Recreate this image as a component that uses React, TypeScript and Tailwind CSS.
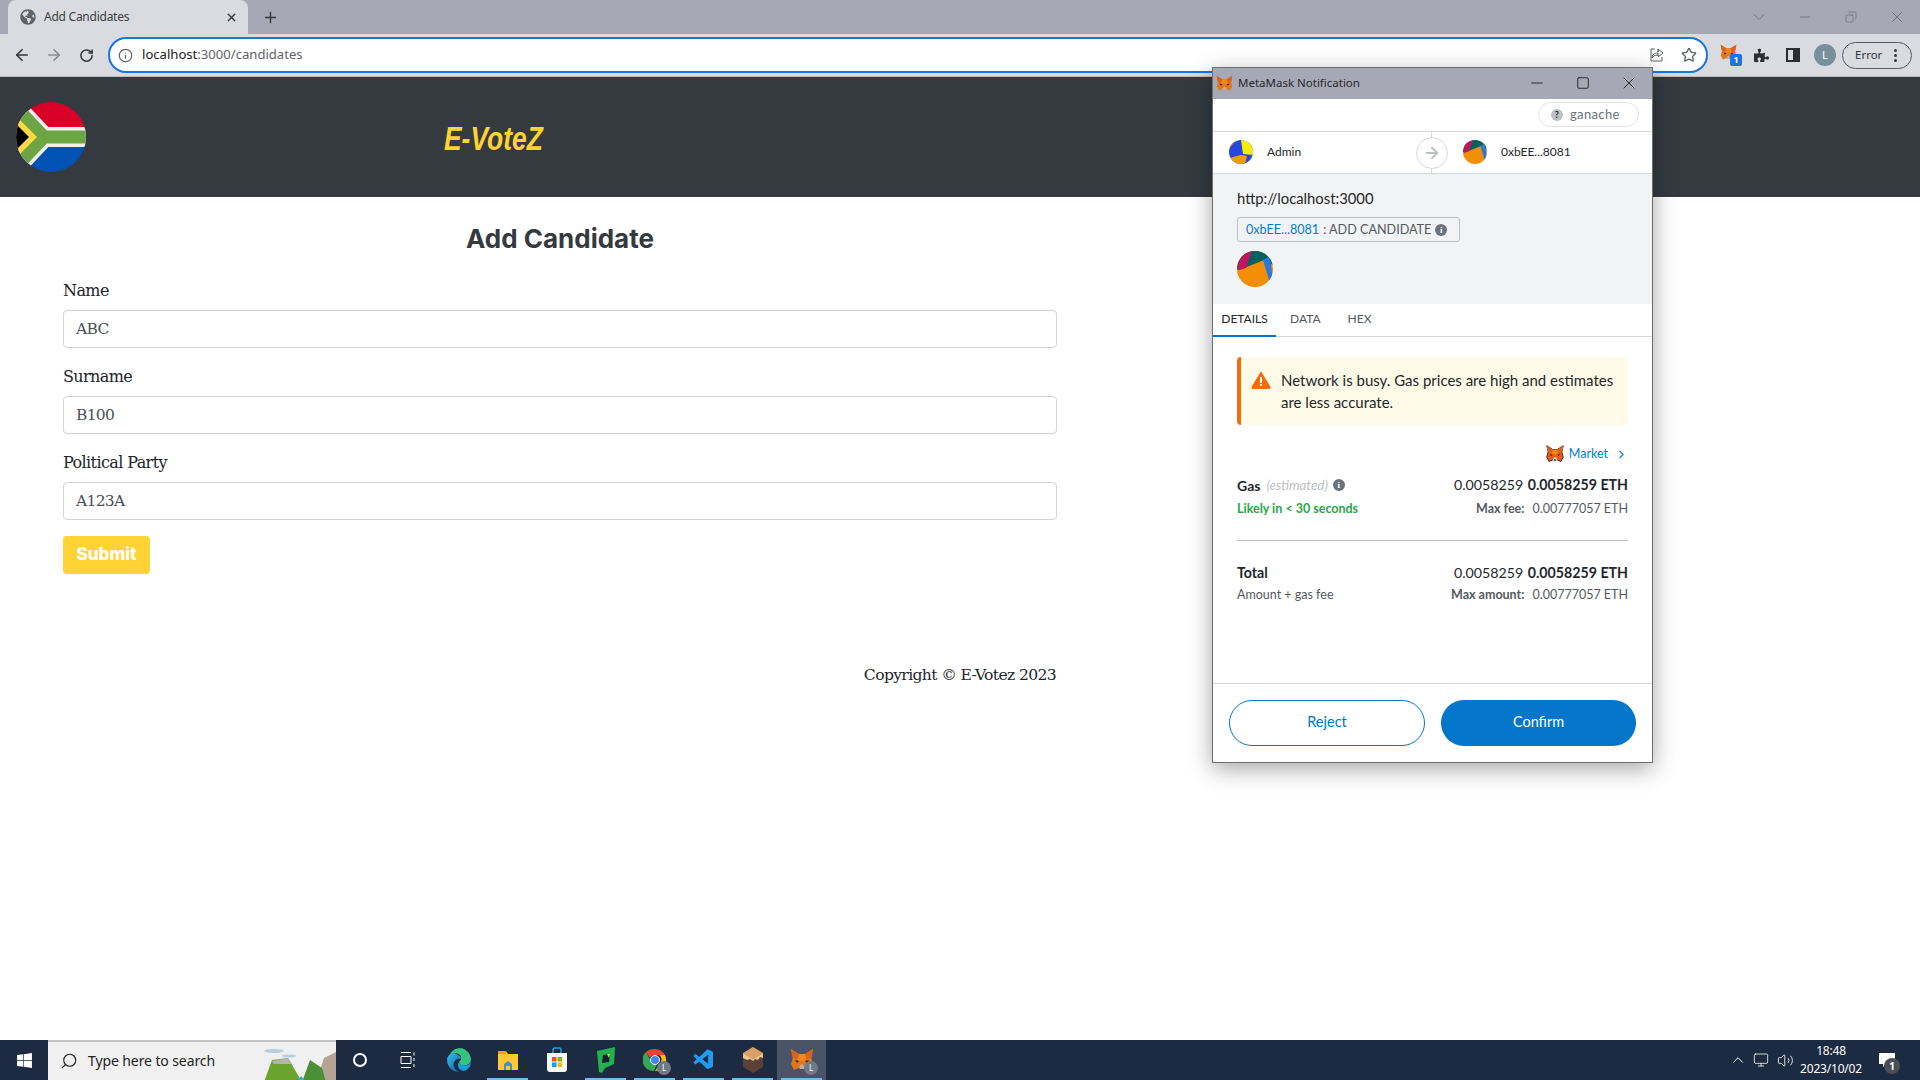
import { ArrowLeft, ArrowRight, RotateCw, Info, Star, Plus, X, Minus, Square, ChevronDown, ChevronRight, ChevronUp, Copy, Search, Volume2, Monitor } from "lucide-react";
import { FaPuzzlePiece, FaWindows, FaGlobeAmericas } from "react-icons/fa";
import { VscVscode } from "react-icons/vsc";

function Fox({ size = 18, face = false }: { size?: number; face?: boolean }) {
  return (
    <svg width={size} height={size} viewBox="0 0 24 24">
      <path d="M1 1l8 5h6l8-5-2 8 2 7-3 6-5-2h-6l-5 2-3-6 2-7z" fill={face ? "#ee5a13" : "#e2761b"} stroke={face ? "#222" : "none"} strokeWidth={face ? 1.2 : 0} />
      <path d="M9 6h6l1 6-4 1-4-1z" fill="#f6851b" />
      <path d="M5 12l4 1-2 2z M19 12l-4 1 2 2z" fill="#3a2a1a" />
      <path d="M9 19l3-3 3 3-1 2h-4z" fill={face ? "#fff" : "#c0ad9e"} />
      <path d="M1 1l8 5-2 5-5-2z M23 1l-8 5 2 5 5-2z" fill="#d5651a" />
      {face && <path d="M10 19l2 3 2-3z" fill="#222" />}
    </svg>
  );
}

function Jazz({ size, a }: { size: number; a?: boolean }) {
  return a ? (
    <svg width={size} height={size} viewBox="0 0 24 24">
      <clipPath id="ja"><circle cx="12" cy="12" r="12" /></clipPath>
      <g clipPath="url(#ja)">
        <rect width="24" height="24" fill="#2547dd" />
        <path d="M12 0h12v15l-10-1z" fill="#f8ee05" />
        <path d="M0 18l12-3 6 1-2 8H0z" fill="#f79a08" />
        <path d="M0 0h7L4 4 0 9z" fill="#f26b1d" />
      </g>
    </svg>
  ) : (
    <svg width={size} height={size} viewBox="0 0 36 36">
      <clipPath id={`jb${size}`}><circle cx="18" cy="18" r="18" /></clipPath>
      <g clipPath={`url(#jb${size})`}>
        <rect width="36" height="36" fill="#f38e05" />
        <path d="M0 0h36v14L27 9 2 19 0 18z" fill="#03625f" />
        <path d="M0 17L5 4l10-4 -6 17-7 2z" fill="#c4145f" />
        <path d="M26 9l7-4 3 26-3 1z" fill="#2479e2" />
        <path d="M33 28l-3 8h6z" fill="#2479e2" />
      </g>
    </svg>
  );
}

function Flag() {
  return (
    <svg width="70" height="70" viewBox="0 0 70 70" fill="none">
      <clipPath id="fl"><circle cx="35" cy="35" r="35" /></clipPath>
      <g clipPath="url(#fl)">
        <rect width="70" height="35" fill="#d80027" />
        <rect y="35" width="70" height="35" fill="#0052b4" />
        <path d="M-5 0L28 35-5 70M28 35H70" stroke="#f0f0f0" strokeWidth="20" />
        <path d="M-5 0L28 35-5 70M28 35H70" stroke="#6da544" strokeWidth="13" />
        <path d="M0 14L21 35 0 56z" fill="#ffda44" />
        <path d="M0 22L13 35 0 48z" fill="#000" />
      </g>
    </svg>
  );
}

function Field({ label, value }: { label: string; value: string }) {
  return (
    <div className="mb-[16px]">
      <div className="h-[24px] mb-[8px] pt-[1px] leading-[24px] text-[16px] text-[#212529] font-['DejaVu_Serif',serif] tracking-[-0.6px]">{label}</div>
      <div className="h-[38px] border border-[#ced4da] rounded-[4px] bg-white px-[12px] leading-[37px] text-[15.5px] text-[#495057] font-['DejaVu_Serif',serif] tracking-[-0.7px]">{value}</div>
    </div>
  );
}

function TaskIcon({ children, active, line }: { children: React.ReactNode; active?: boolean; line?: boolean }) {
  return (
    <div className={`relative w-[49px] h-[40px] flex items-center justify-center ${active ? "bg-[#4a5468]" : ""}`}>
      {children}
      {line && <div className="absolute bottom-0 left-[4px] right-[4px] h-[2px] bg-[#76b9ed]" />}
    </div>
  );
}

function Badge() {
  return <div className="absolute left-[27px] top-[21px] w-[14px] h-[14px] rounded-full bg-[#6c7a89] text-white text-[8px] leading-[14px] text-center font-['Noto_Sans',sans-serif]">L</div>;
}

function Popup() {
  return (
    <div className="absolute left-[1212px] top-[67px] w-[441px] h-[696px] border border-[#6e6e6e] bg-white flex flex-col shadow-[0_6px_22px_rgba(0,0,0,0.35)] font-['Lato',sans-serif] text-[#24272a]">
      <div className="h-[31px] bg-[#a6a9b5] flex items-center pl-[3px] shrink-0">
        <Fox size={17} />
        <span className="ml-[5px] mb-[2px] text-[11.5px] text-[#25282c] font-['Noto_Sans',sans-serif]">MetaMask Notification</span>
        <div className="ml-auto flex items-center -translate-y-[1px] text-[#1c1c1c]">
          <div className="w-[46px] flex justify-center"><Minus size={18} strokeWidth={1.2} /></div>
          <div className="w-[46px] flex justify-center"><Square size={14} strokeWidth={1.5} /></div>
          <div className="w-[46px] flex justify-center"><X size={20} strokeWidth={1.1} /></div>
        </div>
      </div>
      <div className="h-[33px] flex justify-end items-center pr-[13px] border-b border-[#d6d9dc] shrink-0">
        <div className="h-[25px] w-[101px] mb-[1px] rounded-full border border-[#e0e3e6] flex items-center pl-[12px] gap-[7px] text-[13px] text-[#6a737d] tracking-[0.35px]">
          <span className="w-[12px] h-[12px] rounded-full bg-[#bbc0c5] text-[9px] leading-[12px] text-center font-bold text-[#24272a]">?</span>
          ganache
        </div>
      </div>
      <div className="relative h-[42px] flex items-center border-b border-[#d6d9dc] shrink-0">
        <div className="w-[219px] flex items-center pl-[16px] gap-[14px] text-[12px] -translate-y-[1px]">
          <Jazz size={24} a />
          <span>Admin</span>
        </div>
        <div className="absolute left-[218px] top-0 bottom-0 w-px bg-[#d6d9dc]" />
        <div className="absolute left-[203px] top-[5px] w-[32px] h-[32px] rounded-full bg-white border border-[#d6d9dc] flex items-center justify-center">
          <ArrowRight size={18} strokeWidth={2.6} className="text-[#bbc0c5]" />
        </div>
        <div className="ml-[31px] flex items-center gap-[14px] text-[12px] -translate-y-[1px]">
          <Jazz size={24} />
          <span>0xbEE...8081</span>
        </div>
      </div>
      <div className="h-[130px] bg-[#f2f3f4] pl-[24px] pt-[14px] shrink-0">
        <div className="text-[14.8px] leading-[20px]">http://localhost:3000</div>
        <div className="mt-[9px] w-[223px] h-[25px] pt-[1px] rounded-[3px] border border-[#bbc0c5] flex items-center pl-[8px] text-[12.6px] text-[#535a61]">
          <span className="text-[#037dd6]">0xbEE...8081</span>
          <span className="ml-[4px]">: ADD CANDIDATE</span>
          <span className="ml-[4px] w-[12px] h-[12px] rounded-full bg-[#6a737d] text-white text-[9px] leading-[12px] text-center font-bold font-['Liberation_Serif',serif]">i</span>
        </div>
        <div className="mt-[9px]"><Jazz size={36} /></div>
      </div>
      <div className="h-[33px] flex border-b border-[#d6d9dc] text-[12px] text-[#535a61] shrink-0">
        <div className="relative w-[63px] pb-[2px] flex items-center justify-center text-[#24272a] -mb-px border-b-[2px] border-[#0376c9]">DETAILS</div>
        <div className="ml-[14px] pb-[2px] flex items-center">DATA</div>
        <div className="ml-[27px] pb-[2px] flex items-center">HEX</div>
      </div>
      <div className="flex-1 px-[24px] pt-[20px]">
        <div className="h-[68px] rounded-[4px] bg-[#fefae8] border-l-[4px] border-[#f66a0a] flex items-start pl-[10px] pt-[12px] gap-[10px]">
          <svg width="20" height="18" viewBox="0 0 20 18" className="mt-[2px] shrink-0">
            <path d="M10 1L19 16a1 1 0 0 1-1 1.4H2A1 1 0 0 1 1 16z" fill="#f66a0a" stroke="#f66a0a" strokeLinejoin="round" />
            <rect x="9" y="6" width="2" height="6" fill="#fff" />
            <rect x="9" y="13" width="2" height="2" fill="#fff" />
          </svg>
          <div className="text-[15px] leading-[22px]">Network is busy. Gas prices are high and estimates are less accurate.</div>
        </div>
        <div className="mt-[19px] h-[20px] flex justify-end items-center text-[12.5px] text-[#037dd6]">
          <Fox size={18} face />
          <span className="ml-[5px]">Market</span>
          <ChevronRight size={13} className="ml-[7px]" />
        </div>
        <div className="mt-[10px] h-[22px] flex justify-between items-center">
          <div className="flex items-center text-[12px]">
            <b className="text-[14px]">Gas</b>
            <i className="ml-[6px] text-[#bbc0c5] text-[13.4px]">(estimated)</i>
            <span className="ml-[5px] w-[12px] h-[12px] rounded-full bg-[#6a737d] text-white text-[9px] leading-[12px] text-center font-bold font-['Liberation_Serif',serif]">i</span>
          </div>
          <div className="text-[14.2px]">0.0058259 <b className="ml-[1px]">0.0058259 ETH</b></div>
        </div>
        <div className="h-[24px] pt-[2px] flex justify-between items-center text-[12.5px]">
          <b className="text-[#28a745]">Likely in &lt; 30 seconds</b>
          <div className="text-[#535a61]"><b className="mr-[8px]">Max fee:</b>0.00777057 ETH</div>
        </div>
        <div className="mt-[20px] h-px bg-[#bbc0c5]" />
        <div className="mt-[21px] h-[21px] flex justify-between items-center">
          <b className="text-[14.2px]">Total</b>
          <div className="text-[14.2px]">0.0058259 <b className="ml-[1px]">0.0058259 ETH</b></div>
        </div>
        <div className="h-[22px] pt-[2px] flex justify-between items-center text-[12.5px] text-[#535a61]">
          <span>Amount + gas fee</span>
          <div><b className="mr-[8px]">Max amount:</b>0.00777057 ETH</div>
        </div>
      </div>
      <div className="h-[79px] border-t border-[#d6d9dc] flex gap-[16px] pl-[16px] pt-[16px] shrink-0">
        <div className="w-[196px] h-[46px] pb-[3px] rounded-full border border-[#0376c9] text-[#0376c9] text-[14.5px] flex items-center justify-center">Reject</div>
        <div className="w-[195px] h-[46px] pb-[3px] rounded-full bg-[#0376c9] text-white text-[14.5px] flex items-center justify-center">Confirm</div>
      </div>
    </div>
  );
}

export default function App() {
  return (
    <div className="relative w-[1920px] h-[1080px] overflow-hidden bg-white flex flex-col font-['Noto_Sans',sans-serif]">
      <div className="h-[34px] bg-[#a6a9b5] flex items-end pl-[8px] shrink-0 relative">
        <div className="w-[240px] h-[34px] bg-[#d9dbe1] rounded-t-[8px] flex items-center pl-[12px] pr-[10px] text-[12px] text-[#3c4043]">
          <FaGlobeAmericas size={16} className="text-[#5f6368]" />
          <span className="ml-[8px] tracking-[-0.25px]">Add Candidates</span>
          <X size={13} strokeWidth={2.5} className="ml-auto text-[#35383c]" />
        </div>
        <Plus size={17} strokeWidth={2} className="ml-[14px] mb-[8px] text-[#33363a]" />
        <div className="ml-auto flex items-center h-[34px] text-[#6a6d77]">
          <div className="w-[46px] flex justify-center"><ChevronDown size={20} strokeWidth={1} /></div>
          <div className="w-[46px] flex justify-center"><Minus size={16} strokeWidth={1.2} /></div>
          <div className="w-[46px] flex justify-center"><Copy size={12} strokeWidth={1.4} className="-scale-x-100" /></div>
          <div className="w-[46px] flex justify-center"><X size={18} strokeWidth={1.2} /></div>
        </div>
      </div>
      <div className="h-[43px] bg-[#d9dbe1] border-b border-[#b9bbc0] flex items-center shrink-0">
        <ArrowLeft size={18} strokeWidth={2.2} className="ml-[13px] text-[#33363a]" />
        <ArrowRight size={18} strokeWidth={2.2} className="ml-[14px] text-[#8a8c91]" />
        <RotateCw size={15} strokeWidth={2.4} className="ml-[16px] text-[#33363a]" />
        <div className="ml-[14px] w-[1600px] h-[36px] rounded-full bg-white border-[2px] border-[#1a73e8] flex items-center pl-[8px] pr-[9px] text-[13.1px]">
          <Info size={15} className="text-[#5f6368]" />
          <span className="ml-[9px] text-[#202124]">localhost</span>
          <span className="text-[#5f6368]">:3000/candidates</span>
          <svg width="16" height="16" viewBox="0 0 16 16" fill="none" stroke="#5f6368" className="ml-auto mr-[16px]"><path d="M6 2H2v12h11v-4M9 9V6c-4 0-6 2-6 5 1-2 3-3 6-3zM9 2v3-3l5 4-5 4" strokeLinejoin="round" /></svg>
          <Star size={16} className="text-[#5f6368]" strokeWidth={2} />
        </div>
        <div className="relative ml-[12px] w-[22px] h-[22px]">
          <Fox size={17} />
          <div className="absolute left-[10px] top-[10px] w-[12px] h-[12px] bg-[#1a73e8] rounded-[2px] text-white text-[9px] leading-[12px] text-center font-bold">1</div>
        </div>
        <FaPuzzlePiece size={15} className="ml-[12px] text-[#2b2e33]" />
        <div className="ml-[17px] w-[14px] h-[14px] border-[2px] border-[#2b2e33] flex justify-end"><div className="w-[5px] h-full bg-[#2b2e33]" /></div>
        <div className="ml-[14px] w-[22px] h-[22px] rounded-full bg-[#78909c] text-white text-[11px] leading-[22px] text-center">L</div>
        <div className="ml-[6px] w-[70px] h-[27px] rounded-full border border-[#55585e] flex items-center pl-[12px] text-[11.5px] text-[#33363a]">
          Error
          <div className="ml-[12px] flex flex-col gap-[2px]">
            <span className="w-[3px] h-[3px] rounded-full bg-[#33363a]" />
            <span className="w-[3px] h-[3px] rounded-full bg-[#33363a]" />
            <span className="w-[3px] h-[3px] rounded-full bg-[#33363a]" />
          </div>
        </div>
      </div>

      <div className="h-[120px] bg-[#343a40] flex items-center pl-[16px] shrink-0">
        <Flag />
        <div className="ml-[358px] mt-[3px] origin-left scale-x-[0.8] text-[33px] font-bold italic text-[#ffd333] font-['Liberation_Sans',sans-serif]">E-VoteZ</div>
      </div>

      <div className="flex-1 w-[1120px] px-[63px]">
        <h1 className="pt-[24px] h-[81px] text-center text-[26px] leading-[36px] font-bold text-[#343a40] font-['Inter',sans-serif]">Add Candidate</h1>
        <Field label="Name" value="ABC" />
        <Field label="Surname" value="B100" />
        <Field label="Political Party" value="A123A" />
        <div className="w-[87px] h-[38px] rounded-[4px] bg-[#ffd333] text-white text-[17px] font-extrabold flex items-center justify-center font-['Inter',sans-serif]">Submit</div>
        <div className="mt-[90px] text-right text-[15.6px] text-[#212529] font-['DejaVu_Serif',serif] tracking-[-0.65px] pr-[1px]">Copyright © E-Votez 2023</div>
      </div>

      <div className="h-[40px] bg-[#1c2a42] flex items-center shrink-0">
        <div className="w-[48px] flex justify-center"><FaWindows size={17} className="text-white" /></div>
        <div className="relative w-[288px] h-[40px] pb-[1px] bg-[#f0f0f0] border-t-[2px] border-[#c4c4c4] flex items-center pl-[12px] text-[14px] text-[#1f1f1f] overflow-hidden">
          <Search size={18} strokeWidth={1.5} className="-scale-x-100" />
          <span className="ml-[10px] tracking-[-0.1px]">Type here to search</span>
          <svg width="80" height="40" viewBox="0 0 80 40" className="absolute right-0 top-0">
            <ellipse cx="18" cy="9" rx="10" ry="2" fill="#b8cfe0" />
            <ellipse cx="33" cy="14" rx="7" ry="1.6" fill="#b8cfe0" />
            <path d="M60 40l8-24 12-6v30z" fill="#b7a394" />
            <path d="M8 40L16 18l16-2 14 24z" fill="#6aa32d" />
            <path d="M16 19l16-3 4 6-18 0z" fill="#b4b5ae" />
            <path d="M46 40l8-22 12 8 4 14z" fill="#4d8f37" />
            <path d="M40 40l5-6 5 6z" fill="#35b0c8" />
          </svg>
        </div>
        <div className="w-[48px] flex justify-center"><div className="w-[14px] h-[14px] rounded-full border-[2px] border-white" /></div>
        <div className="w-[50px] flex justify-center pr-[3px]">
          <svg width="16" height="16" viewBox="0 0 16 16" fill="none" stroke="#fff"><path d="M1 .5h10M1 15.5h10M1 4.5h10v7H1zM14 .5v3M14 6v3M14 12v3" /></svg>
        </div>
        <TaskIcon>
          <svg width="26" height="26" viewBox="0 0 24 24">
            <defs><linearGradient id="eg" x1="0" y1="0" x2="1" y2="1"><stop offset="0" stopColor="#35c1f1" /><stop offset="1" stopColor="#0c59a4" /></linearGradient></defs>
            <path d="M12 1a11 11 0 0 1 11 11c0 3-3 5-6 5-2 0-5-1-5-3 0-1 2-1 2-4 0-3-4-5-7-4-3 1-5 5-5 6A11.500 11.500 0 0 1 12 1z" fill="#33c481" />
            <path d="M1 12c0-4 4-7 7-6 3 1 6 3 6 5-3-1-7 1-7 5 0 3 2 6 5 7A11 11 0 0 1 1 12z" fill="url(#eg)" />
            <path d="M23 14c-1 2-3 3-6 3-2 0-5-1-5-3-2 2-1 8 5 8 3-1 6-4 6-8z" fill="#1b9de2" />
          </svg>
        </TaskIcon>
        <TaskIcon line>
          <svg width="24" height="24" viewBox="0 0 24 24">
            <path d="M2 3h8l2 3h10v16H2z" fill="#ffc933" />
            <path d="M2 3h8v3H2z" fill="#e8a317" />
            <path d="M8 22v-6l4-3 4 3v6z" fill="#3b8fd6" />
            <path d="M10 22v-4h4v4z" fill="#ffc933" />
          </svg>
        </TaskIcon>
        <TaskIcon>
          <svg width="24" height="26" viewBox="0 0 24 26">
            <path d="M8 7V3a2 2 0 0 1 2-2h4a2 2 0 0 1 2 2v4" fill="none" stroke="#1ca0e5" strokeWidth="1.5" />
            <path d="M2 6h20v16a3 3 0 0 1-3 3H5a3 3 0 0 1-3-3z" fill="#f7f7f7" />
            <rect x="7" y="10" width="4.500" height="4.500" fill="#f25022" />
            <rect x="12.500" y="10" width="4.500" height="4.500" fill="#7fba00" />
            <rect x="7" y="15.500" width="4.500" height="4.500" fill="#00a4ef" />
            <rect x="12.500" y="15.500" width="4.500" height="4.500" fill="#ffb900" />
          </svg>
        </TaskIcon>
        <TaskIcon line>
          <svg width="20" height="26" viewBox="0 0 20 26">
            <path d="M1 4l18-4-1 17-9 4-3 5-3-1z" fill="#23b14d" />
            <path d="M7 8l7-1-1 8-7 1z" fill="#15202c" />
            <path d="M11 7l3 0-1 4z" fill="#c2e83b" />
          </svg>
        </TaskIcon>
        <TaskIcon line>
          <svg width="24" height="24" viewBox="0 0 24 24">
            <path d="M12 1a11 11 0 0 1 10 6H12a5 5 0 0 0-5 3L3 4a11 11 0 0 1 9-3z" fill="#ea4335" />
            <path d="M22 7a11 11 0 0 1-10 16l5-8a5 5 0 0 0-1-8z" fill="#fbbc05" />
            <path d="M3 4l5 9a5 5 0 0 0 6 3l-3 7A11 11 0 0 1 3 4z" fill="#34a853" />
            <circle cx="12" cy="12" r="4.500" fill="#4285f4" stroke="#fff" />
          </svg>
          <Badge />
        </TaskIcon>
        <TaskIcon line><VscVscode size={24} className="text-[#1f9cf0]" /></TaskIcon>
        <TaskIcon line>
          <svg width="22" height="26" viewBox="0 0 22 26">
            <path d="M11 0l10 6v14l-10 6L1 20V6z" fill="#5d4037" />
            <path d="M11 0l10 6-10 6L1 6z" fill="#d9a066" />
            <path d="M1 6l10 6 10-6v5l-3-1-2 3-3-1-2 2-3-2-3 1-4-2z" fill="#eec48d" />
          </svg>
        </TaskIcon>
        <TaskIcon line active><Fox size={24} /><Badge /></TaskIcon>
        <div className="ml-auto flex items-center text-white pr-[9px]">
          <ChevronUp size={18} strokeWidth={1.3} className="mr-[6px]" />
          <Monitor size={16} strokeWidth={1.2} className="mr-[8px]" />
          <Volume2 size={17} strokeWidth={1.2} className="mr-[5px]" />
          <div className="w-[64px] text-center text-[12px] leading-[18px] font-['Noto_Sans',sans-serif] tracking-[-0.2px]">
            <div>18:48</div>
            <div>2023/10/02</div>
          </div>
          <div className="relative w-[48px] h-[40px] flex items-center justify-center">
            <svg width="16" height="15" viewBox="0 0 16 15" fill="#fff"><path d="M0 0h16v11H7l-3 3v-3H0z" /></svg>
            <div className="absolute left-[21px] top-[18px] w-[16px] h-[16px] rounded-full bg-[#4a4f57] text-white text-[10px] leading-[16px] text-center font-bold">1</div>
          </div>
        </div>
      </div>
      <Popup />
    </div>
  );
}
